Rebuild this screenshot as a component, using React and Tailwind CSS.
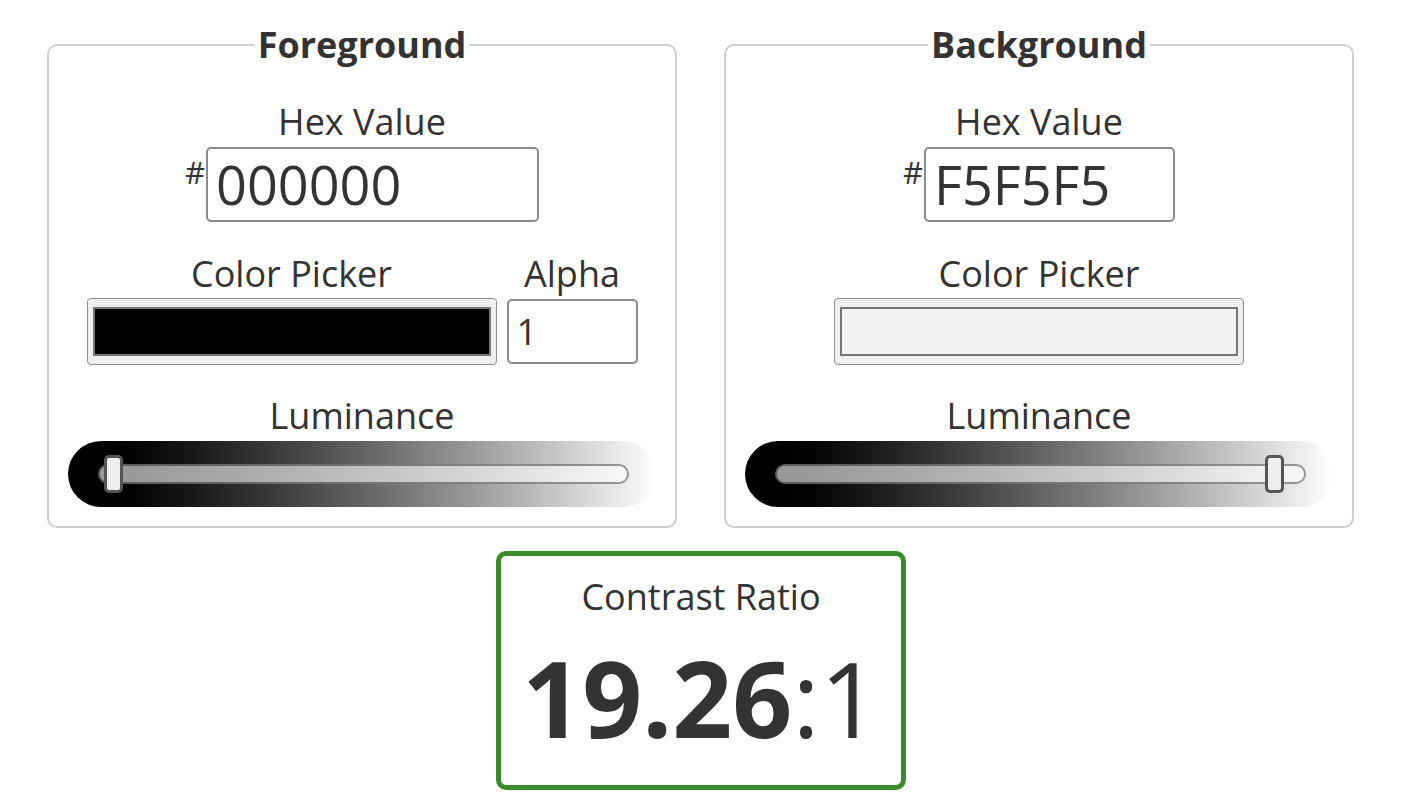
import React from "react";

function HexInput({ value, width }) {
  return (
    <div className="flex items-start">
      <span className="text-[31px] leading-none mt-[10px] mr-[1px]">#</span>
      <input
        readOnly
        value={value}
        className="h-[75px] border-2 border-[#8a8a8a] rounded-[5px] pl-[8px] text-[54px] text-[#333] bg-white outline-none font-['Open_Sans']"
        style={{ width }}
      />
    </div>
  );
}

function Picker({ color }) {
  return (
    <div className="w-[410px] h-[67px] rounded-[4px] border-[1.5px] border-[#8f8f8f] bg-[#efefef] px-[5px] py-[8px]">
      <div className="h-full w-full border-2 border-[#777]" style={{ background: color }} />
    </div>
  );
}

function Slider({ thumbLeft }) {
  return (
    <div className="w-[588px] h-[66px] rounded-full bg-linear-to-r from-black to-white flex items-center pl-[30px] pr-[27px] mt-[1px]">
      <div className="relative flex-1 h-[20px] rounded-full border-2 border-black/40 bg-white/60">
        <div
          className="absolute top-1/2 -translate-y-1/2 w-[19px] h-[38px] rounded-[5px] border-[3px] border-[#555] bg-[#eee]"
          style={{ left: thumbLeft }}
        />
      </div>
    </div>
  );
}

function Panel({ title, hex, hexWidth, color, alpha, thumbLeft }) {
  return (
    <fieldset className="w-[630px] border-2 border-[#cfcfcf] rounded-[10px] pb-[19px] flex flex-col items-center">
      <legend className="mx-auto px-[3px] text-[36px] font-bold leading-[49px]">{title}</legend>
      <div className="mt-[28px] text-[36px] leading-[49px]">Hex Value</div>
      <div className="mt-[1px]">
        <HexInput value={hex} width={hexWidth} />
      </div>
      <div className="mt-[27px] flex items-start gap-[10px]">
        <div className="flex flex-col items-center">
          <div className="text-[36px] leading-[49px]">Color Picker</div>
          <Picker color={color} />
        </div>
        {alpha && (
          <div className="flex flex-col items-center">
            <div className="text-[36px] leading-[49px]">Alpha</div>
            <input
              readOnly
              value="1"
              className="mt-[1px] w-[131px] h-[65px] border-2 border-[#8a8a8a] rounded-[5px] pl-[8px] text-[36px] text-[#333] bg-white outline-none font-['Open_Sans']"
            />
          </div>
        )}
      </div>
      <div className="mt-[26px] text-[36px] leading-[49px]">Luminance</div>
      <Slider thumbLeft={thumbLeft} />
    </fieldset>
  );
}

export default function App() {
  return (
    <div className="w-[1408px] h-[810px] bg-white text-[#333] font-['Open_Sans',sans-serif] overflow-hidden">
      <div className="ml-[47px] w-[1308px] pt-[20px]">
        <div className="flex gap-[47px]">
          <Panel title="Foreground" hex="000000" hexWidth={333} color="#000" alpha thumbLeft={4} />
          <Panel title="Background" hex="F5F5F5" hexWidth={251} color="#f4f4f4" thumbLeft={488} />
        </div>
        <div className="flex justify-center mt-[23px]">
          <div className="w-[410px] h-[239px] border-[5px] border-[#3b8a2b] rounded-[10px] flex flex-col items-center pt-[16px]">
            <div className="text-[36px] leading-[49px]">Contrast Ratio</div>
            <div className="mt-[24px] text-[105px] leading-[105px]">
              <span className="font-bold">19.26</span>
              <span>:1</span>
            </div>
          </div>
        </div>
      </div>
    </div>
  );
}
